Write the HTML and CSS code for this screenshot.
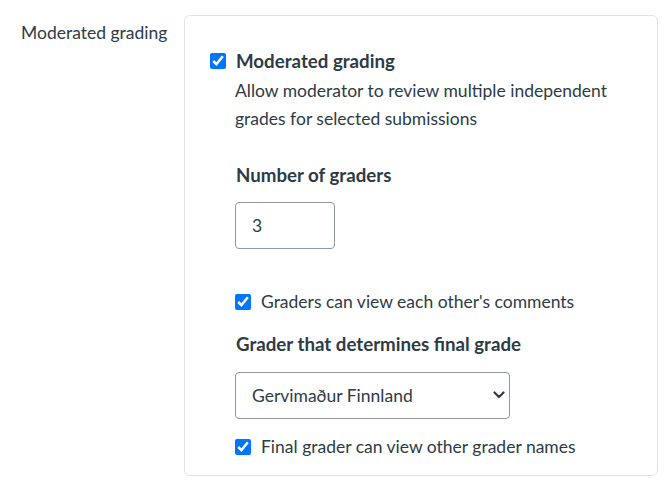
FILE: index.html
```html
<!doctype html>
<html>
<head>
<meta charset="utf-8">
<title>Moderated grading</title>
<link rel="stylesheet" href="styles.css">
</head>
<body>
<div class="row">
	<div class="row-label">Moderated grading</div>
	<div class="panel">
		<div class="check-main">
			<input type="checkbox" class="cb" id="moderated" checked />
			<div class="main-body">
				<label for="moderated" class="title">Moderated grading</label>
				<div class="desc">Allow moderator to review multiple independent grades for selected submissions</div>

				<div class="sub-title sub-first">Number of graders</div>
				<input type="text" class="num" value="3" />

				<label class="check-line check-comments">
					<input type="checkbox" class="cb" checked />
					<span>Graders can view each other's comments</span>
				</label>

				<div class="sub-title sub-grader">Grader that determines final grade</div>
				<div class="select-wrap">
					<select class="sel">
						<option>Gervimaður Finnland</option>
					</select>
					<svg class="chev" width="12" height="8" viewBox="0 0 12 8"><path d="M1.5 1.5 L6 6 L10.5 1.5" fill="none" stroke="#2d3b45" stroke-width="2.2" stroke-linecap="round" stroke-linejoin="round"/></svg>
				</div>

				<label class="check-line check-names">
					<input type="checkbox" class="cb" checked />
					<span>Final grader can view other grader names</span>
				</label>
			</div>
		</div>
	</div>
</div>
</body>
</html>
```

FILE: styles.css
```css
*{ margin:0; padding:0; box-sizing:border-box;}
body{ font-family:Lato, "Liberation Sans", sans-serif; color:#2d3b45; background:#fff; font-size:17.5px;}
.row{ display:flex; padding-top:15px;}
.row-label{ width:184px; padding-left:21px; padding-top:6px; line-height:24px; font-size:17.5px;}
.panel{ width:474px; height:461px; border:1px solid #e0e3e5; border-radius:6px; padding:33px 0 0 25px;}
.check-main{ display:flex; gap:9px; align-items:flex-start;}
.cb{ width:16px; height:16px; margin:4px 0 0 0; accent-color:#0075ff; flex:none;}
.title{ display:block; padding-left:1px; font-size:18.7px; font-weight:700; line-height:24px;}
.desc{ margin-top:4px; width:390px; line-height:28px; font-size:17.5px;}
.sub-title{ padding-left:1px; font-size:18.7px; font-weight:700; line-height:24px;}
.sub-first{ margin-top:30px;}
.num{ display:block; margin-top:15px; width:100px; height:47px; border:1px solid #8e979d; border-radius:4px; padding:0 16px; font-family:inherit; font-size:17.5px; color:#2d3b45;}
.check-line{ display:flex; gap:10px; align-items:flex-start; line-height:24px; font-size:17.5px;}
.check-comments{ margin-top:41px;}
.sub-grader{ margin-top:18px;}
.select-wrap{ position:relative; width:275px; margin-top:16px;}
.sel{ display:block; width:275px; height:47px; border:1px solid #8e979d; border-radius:4px; padding:0 16px; font-family:inherit; font-size:17.5px; color:#2d3b45; background:#fff; -webkit-appearance:none; appearance:none;}
.chev{ position:absolute; right:5px; top:19px; pointer-events:none;}
.check-names{ margin-top:16px;}
```
